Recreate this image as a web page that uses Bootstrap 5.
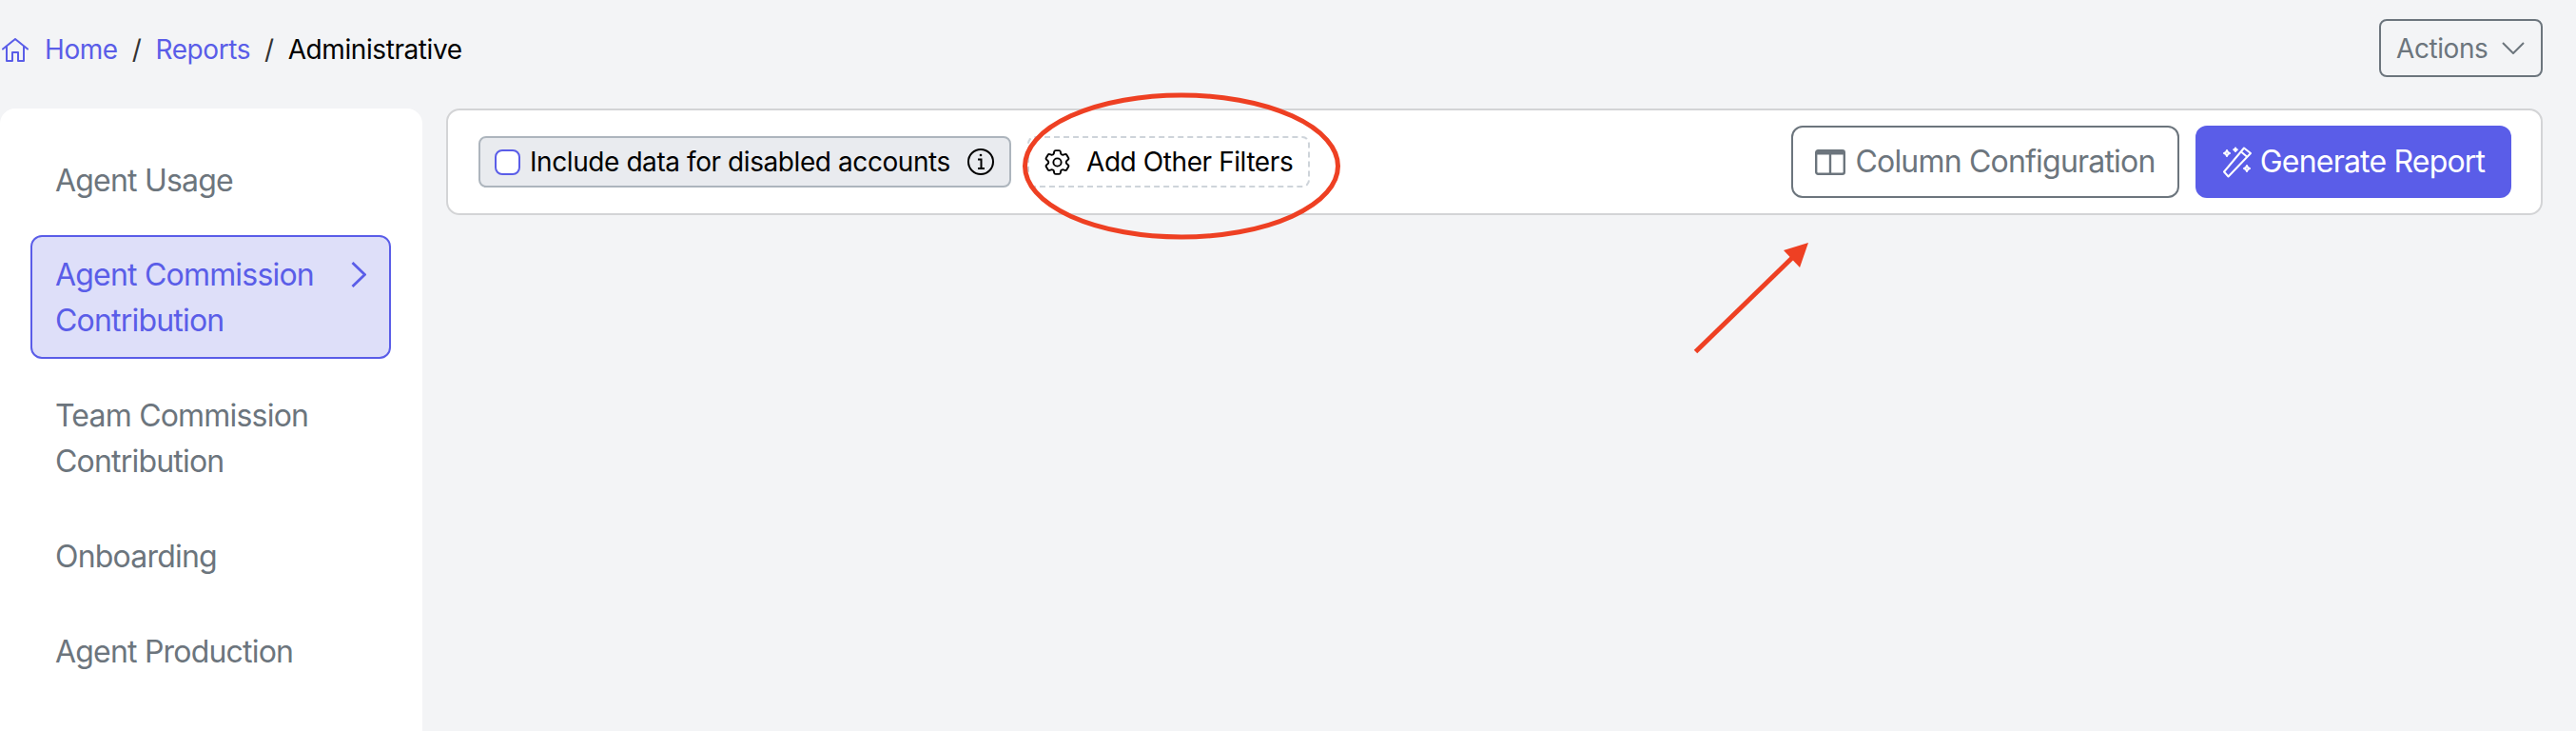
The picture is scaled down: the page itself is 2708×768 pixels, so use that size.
<!DOCTYPE html>
<html lang="en">
<head>
<meta charset="utf-8">
<title>Administrative Reports</title>
<link href="https://cdn.jsdelivr.net/npm/bootstrap@5.3.0/dist/css/bootstrap.min.css" rel="stylesheet">
<style>
:root { --brand: #5a5de8; --brand-soft: #dedff9; --muted: #6c757d; }
html, body { height: 100%; }
body { background: #f3f4f6; font-family: Inter, "Liberation Sans", sans-serif; color: #000; overflow: hidden; position: relative; }
.page-head { height: 114px; padding: 20px 35px 33px 0; }
.crumbs { font-size: 28px; line-height: 42px; letter-spacing: -.42px; margin: 0; --bs-breadcrumb-item-padding-x: 15px; --bs-breadcrumb-margin-bottom: 0; }
.crumbs a { color: var(--brand); text-decoration: none; }
.crumbs .breadcrumb-item.active { color: #000; }
.crumbs .breadcrumb-item + .breadcrumb-item::before { color: #333; }
.crumb-bar { height: 64px; }
.crumb-home { width: 28px; height: 25px; margin: 0 17px 0 2px; }
.btn-actions { width: 172px; height: 61px; font-size: 28px; letter-spacing: -.42px; line-height: 1; color: var(--muted); border: 2px solid var(--muted); border-radius: 8px; padding: 0 17px 0 16px; background: transparent; }
.btn-actions svg { width: 24px; height: 13px; }
.page-body { height: 654px; padding-right: 35px; gap: 25px; }
.side-menu { width: 444px; flex: none; background: #fff; border-radius: 16px 16px 0 0; padding: 35px 33px 0 32px; }
.menu-link { display: flex; justify-content: space-between; font-size: 32px; letter-spacing: -.8px; line-height: 48px; color: var(--muted); padding: 16px 25px; border: 1px solid transparent; border-radius: 12px; text-decoration: none; margin-bottom: 18px; }
.menu-link:first-child { margin-bottom: 16px; }
.menu-link.current { background: var(--brand-soft); color: var(--brand); border: 2px solid var(--brand); padding: 16px 24px 14px; margin-bottom: 19px; }
.menu-link svg { width: 16px; height: 27px; flex: none; margin-top: 10px; }
.tool-panel { height: 112px; background: #fff; border: 2px solid #d3d4d6; border-radius: 14px; padding: 16px 31px 16px 32px; flex: 1; }
.check-chip { height: 54px; width: 560px; background: #e9ebef; border: 2px solid #adb5bd; border-radius: 8px; padding: 0 16px 0 15px; font-size: 28px; letter-spacing: -.42px; }
.check-chip .form-check-input { width: 27px; height: 27px; margin: 0 10px 0 0; flex: none; border: 2px solid var(--brand); border-radius: 8px; background-color: #fff; }
.check-chip label { white-space: nowrap; }
.info-mark { width: 28px; height: 28px; margin-left: auto; }
.add-filters { height: 54px; width: 297px; margin-left: 17px; border: 2px dashed #ced4da; border-radius: 8px; font-size: 28px; letter-spacing: -.42px; color: #000; padding: 0 16px; background: transparent; white-space: nowrap; }
.add-filters svg { width: 27px; height: 27px; margin-right: 17px; flex: none; }
.btn-columns, .btn-generate { height: 76px; font-size: 32px; letter-spacing: -.8px; line-height: 1; border-radius: 12px; padding: 0; white-space: nowrap; }
.btn-columns { width: 408px; color: var(--muted); border: 2px solid var(--muted); background: #fff; }
.btn-columns svg { width: 32px; height: 27px; margin-right: 10px; }
.btn-generate { width: 332px; margin-left: 17px; background: var(--brand); border: 0; color: #fff; }
.btn-generate svg { width: 32px; height: 34px; margin-right: 8px; }
.markup { position: absolute; left: 0; top: 0; width: 2708px; height: 768px; pointer-events: none; }
</style>
</head>
<body>
<header class="page-head d-flex justify-content-between align-items-start">
  <nav aria-label="breadcrumb" class="crumb-bar d-flex align-items-center">
    <svg class="crumb-home" viewBox="0 0 28 25" fill="none" stroke="#5a5de8" stroke-width="2" stroke-linejoin="round" stroke-linecap="round"><path d="M1 11.500 14 1l13 10.500"/><path d="M5 9v15h6v-9h6v9h6V9"/></svg>
    <ol class="breadcrumb crumbs">
      <li class="breadcrumb-item"><a href="#">Home</a></li>
      <li class="breadcrumb-item"><a href="#">Reports</a></li>
      <li class="breadcrumb-item active" aria-current="page">Administrative</li>
    </ol>
  </nav>
  <button type="button" class="btn btn-actions d-flex align-items-center justify-content-between">
    Actions
    <svg viewBox="0 0 24 13" fill="none" stroke="#6c757d" stroke-width="2"><path d="M1 1l11 11L23 1"/></svg>
  </button>
</header>
<main class="page-body d-flex align-items-start">
  <nav class="side-menu d-flex flex-column h-100">
    <a class="menu-link" href="#">Agent Usage</a>
    <a class="menu-link current" href="#" aria-current="page"><span>Agent Commission<br>Contribution</span>
      <svg viewBox="0 0 16 27" fill="none" stroke="#5a5de8" stroke-width="2.800"><path d="M1.500 1 14.500 13.500 1.500 26"/></svg></a>
    <a class="menu-link" href="#">Team Commission<br>Contribution</a>
    <a class="menu-link" href="#">Onboarding</a>
    <a class="menu-link" href="#">Agent Production</a>
  </nav>
  <section class="tool-panel d-flex align-items-center">
    <div class="check-chip d-flex align-items-center">
      <input class="form-check-input" type="checkbox" id="disabledAccounts">
      <label for="disabledAccounts">Include data for disabled accounts</label>
      <svg class="info-mark" viewBox="0 0 28 28" fill="none" stroke="#000" stroke-width="2"><circle cx="14" cy="14" r="13"/><path d="M11 11.500h3.500V21M11 21h7"/><circle cx="14" cy="7" r="1.300" fill="#000" stroke="none"/></svg>
    </div>
    <button type="button" class="btn add-filters d-flex align-items-center">
      <svg viewBox="2.200 2.200 19.600 19.600" fill="none" stroke="#000" stroke-width="1.400" stroke-linejoin="round"><path d="M9.594 3.940c.09-.542.56-.94 1.110-.94h2.593c.55 0 1.020.398 1.110.94l.213 1.281c.063.374.313.686.645.87.074.04.147.083.22.127.324.196.72.257 1.075.124l1.217-.456a1.125 1.125 0 011.370.49l1.296 2.247a1.125 1.125 0 01-.26 1.431l-1.003.827c-.293.24-.438.613-.431.992a6.759 6.759 0 010 .255c-.007.378.138.75.43.99l1.005.828c.424.35.534.954.26 1.430l-1.298 2.247a1.125 1.125 0 01-1.369.491l-1.217-.456c-.355-.133-.75-.072-1.076.124a6.570 6.570 0 01-.22.128c-.331.183-.581.495-.644.869l-.213 1.280c-.09.543-.56.941-1.110.941h-2.594c-.55 0-1.020-.398-1.110-.94l-.213-1.281c-.062-.374-.312-.686-.644-.87a6.520 6.520 0 01-.22-.127c-.325-.196-.72-.257-1.076-.124l-1.217.456a1.125 1.125 0 01-1.369-.49l-1.297-2.247a1.125 1.125 0 01.26-1.431l1.004-.827c.292-.24.437-.613.43-.992a6.932 6.932 0 010-.255c.007-.378-.138-.75-.43-.99l-1.004-.828a1.125 1.125 0 01-.26-1.430l1.297-2.247a1.125 1.125 0 011.370-.491l1.216.456c.356.133.751.072 1.076-.124.072-.044.146-.087.22-.128.332-.183.582-.495.644-.869l.214-1.281z"/><path d="M15 12a3 3 0 11-6 0 3 3 0 016 0z"/></svg>
      Add Other Filters
    </button>
    <div class="d-flex ms-auto">
      <button type="button" class="btn btn-columns d-flex align-items-center justify-content-center">
        <svg viewBox="0 0 32 27" fill="none" stroke="#6c757d" stroke-width="2.400"><rect x="1.200" y="1.200" width="29.600" height="24.600" rx="2"/><path d="M1 3.500h30" stroke-width="4"/><path d="M16 3v23"/></svg>
        Column Configuration
      </button>
      <button type="button" class="btn btn-generate d-flex align-items-center justify-content-center">
        <svg viewBox="0 0 32 34" fill="none" stroke="#fff" stroke-width="2" stroke-linejoin="round"><path d="M2 27.500 23 2.500l7 5.500L6.500 32.500z"/><path d="M20 6.500l6.500 5.500"/><path d="M5 5c.5 2 1 2.500 3 3-2 .5-2.500 1-3 3-.5-2-1-2.500-3-3 2-.5 2.500-1 3-3z"/><path d="M14 2.500c.3 1.200.6 1.500 1.800 1.800-1.200.3-1.500.6-1.800 1.800-.3-1.200-.6-1.500-1.800-1.800 1.200-.3 1.500-.6 1.800-1.800z"/><path d="M26 21c.5 2 1 2.500 3 3-2 .5-2.500 1-3 3-.5-2-1-2.500-3-3 2-.5 2.500-1 3-3z"/></svg>
        Generate Report
      </button>
    </div>
  </section>
</main>
<svg class="markup" viewBox="0 0 2708 768" aria-hidden="true">
  <ellipse cx="1242" cy="174.500" rx="164.500" ry="74.500" fill="none" stroke="#ee4023" stroke-width="5"/>
  <path d="M1782.500 369.500 1887 268" fill="none" stroke="#ee4023" stroke-width="5"/>
  <path d="M1901 255 1875 263 1892 281z" fill="#ee4023"/>
</svg>
<script src="https://cdn.jsdelivr.net/npm/bootstrap@5.3.0/dist/js/bootstrap.bundle.min.js"></script>
</body>
</html>
